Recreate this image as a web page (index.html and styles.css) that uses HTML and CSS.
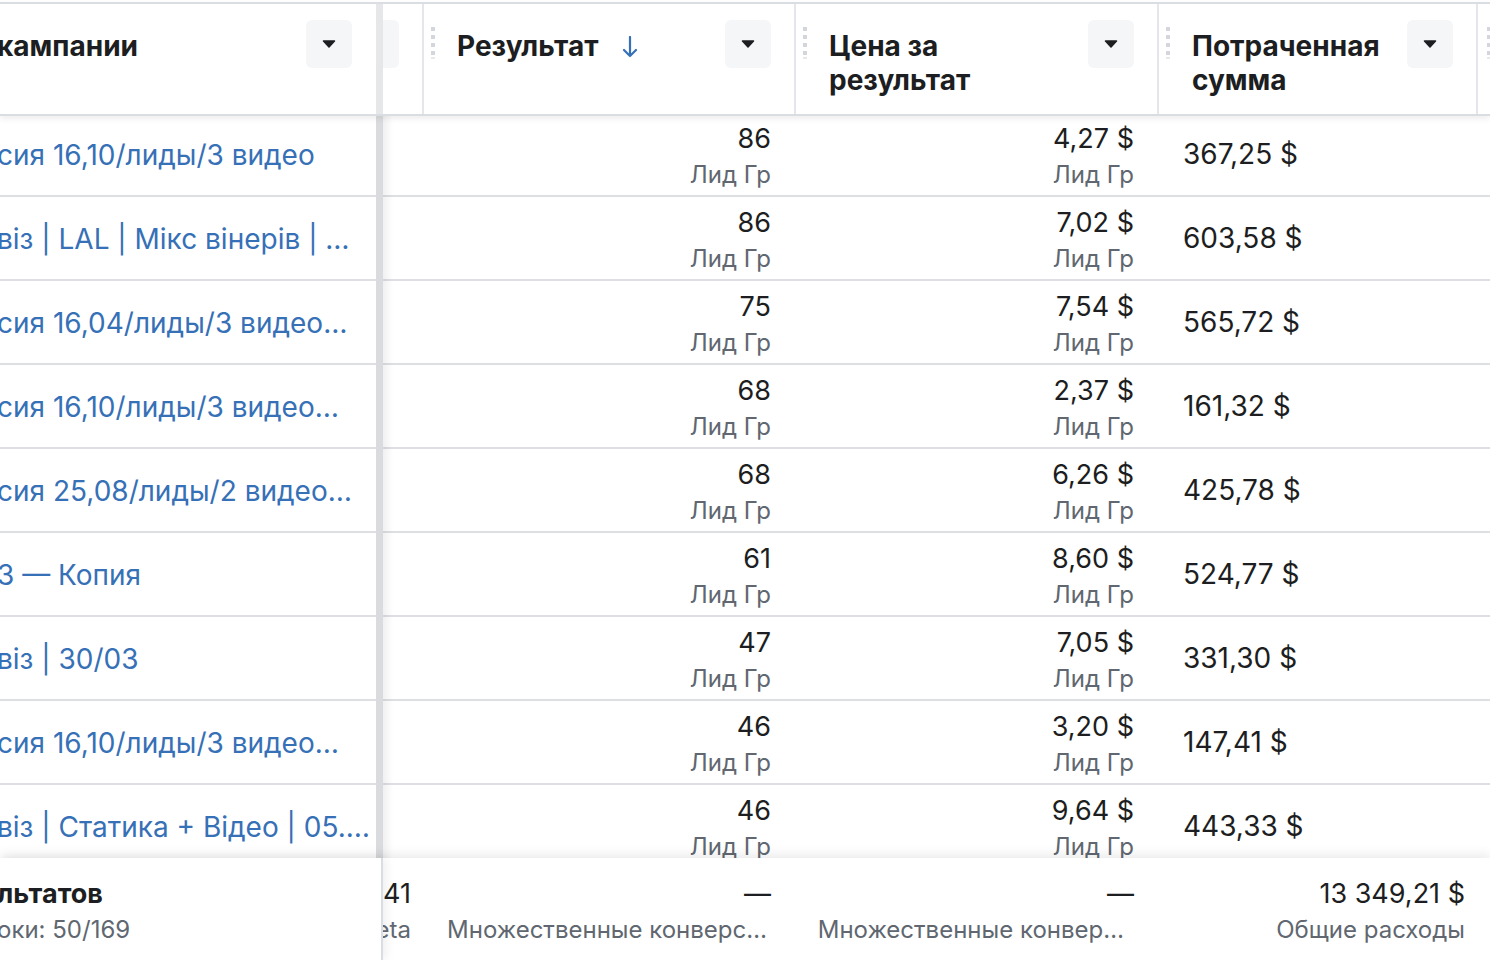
FILE: index.html
```html
<!DOCTYPE html>
<html lang="ru">
<head>
    <meta charset="UTF-8">
    <meta name="viewport" content="width=device-width, initial-scale=1.0">
    <title>Кампании</title>
    <link rel="stylesheet" href="styles.css">
</head>
<body>
    <div class="page">
        <div class="grid head">
            <div class="hcell frozen">
                <span class="htitle cut">кампании</span>
                <button class="drop"><svg width="14" height="8" viewBox="0 0 14 8"><path d="M1.5 1h11L7 7z" fill="#1c1e21" stroke="#1c1e21" stroke-linejoin="round" stroke-width="1.5"/></svg></button>
            </div>
            <div class="hcell stub">
                <button class="drop half"></button>
            </div>
            <div class="hcell col">
                <svg class="grip" width="4" height="32" viewBox="0 0 4 32"><rect y="0" width="4" height="4" fill="#d3d6db"/><rect y="8" width="4" height="4" fill="#d3d6db"/><rect y="16" width="4" height="4" fill="#d3d6db"/><rect y="24" width="4" height="4" fill="#d3d6db"/><rect y="30" width="4" height="2" fill="#e6e8eb"/></svg>
                <span class="htitle">Результат</span>
                <svg class="sort" width="16" height="22" viewBox="0 0 16 22"><path d="M8 1v19M2 14l6 6 6-6" fill="none" stroke="#3670b6" stroke-width="2.2" stroke-linecap="round" stroke-linejoin="round"/></svg>
                <button class="drop"><svg width="14" height="8" viewBox="0 0 14 8"><path d="M1.5 1h11L7 7z" fill="#1c1e21" stroke="#1c1e21" stroke-linejoin="round" stroke-width="1.5"/></svg></button>
            </div>
            <div class="hcell col">
                <svg class="grip" width="4" height="32" viewBox="0 0 4 32"><rect y="0" width="4" height="4" fill="#d3d6db"/><rect y="8" width="4" height="4" fill="#d3d6db"/><rect y="16" width="4" height="4" fill="#d3d6db"/><rect y="24" width="4" height="4" fill="#d3d6db"/><rect y="30" width="4" height="2" fill="#e6e8eb"/></svg>
                <span class="htitle">Цена за<br>результат</span>
                <button class="drop"><svg width="14" height="8" viewBox="0 0 14 8"><path d="M1.5 1h11L7 7z" fill="#1c1e21" stroke="#1c1e21" stroke-linejoin="round" stroke-width="1.5"/></svg></button>
            </div>
            <div class="hcell col">
                <svg class="grip" width="4" height="32" viewBox="0 0 4 32"><rect y="0" width="4" height="4" fill="#d3d6db"/><rect y="8" width="4" height="4" fill="#d3d6db"/><rect y="16" width="4" height="4" fill="#d3d6db"/><rect y="24" width="4" height="4" fill="#d3d6db"/><rect y="30" width="4" height="2" fill="#e6e8eb"/></svg>
                <span class="htitle">Потраченная<br>сумма</span>
                <button class="drop"><svg width="14" height="8" viewBox="0 0 14 8"><path d="M1.5 1h11L7 7z" fill="#1c1e21" stroke="#1c1e21" stroke-linejoin="round" stroke-width="1.5"/></svg></button>
            </div>
            <div class="hcell col last">
                <svg class="grip" width="4" height="32" viewBox="0 0 4 32"><rect y="0" width="4" height="4" fill="#d3d6db"/><rect y="8" width="4" height="4" fill="#d3d6db"/><rect y="16" width="4" height="4" fill="#d3d6db"/><rect y="24" width="4" height="4" fill="#d3d6db"/><rect y="30" width="4" height="2" fill="#e6e8eb"/></svg>
            </div>
        </div>

        <div class="rows">
            <div class="grid row">
                <div class="cell frozen"><a class="name cut">сия 16,10/лиды/3 видео</a></div>
                <div class="cell stub"></div>
                <div class="cell num"><span class="val">86</span><span class="sub">Лид Гр</span></div>
                <div class="cell num"><span class="val">4,27 $</span><span class="sub">Лид Гр</span></div>
                <div class="cell spent">367,25 $</div>
                <div class="cell"></div>
            </div>
            <div class="grid row">
                <div class="cell frozen"><a class="name cut">віз | LAL | Мікс вінерів | …</a></div>
                <div class="cell stub"></div>
                <div class="cell num"><span class="val">86</span><span class="sub">Лид Гр</span></div>
                <div class="cell num"><span class="val">7,02 $</span><span class="sub">Лид Гр</span></div>
                <div class="cell spent">603,58 $</div>
                <div class="cell"></div>
            </div>
            <div class="grid row">
                <div class="cell frozen"><a class="name cut">сия 16,04/лиды/3 видео…</a></div>
                <div class="cell stub"></div>
                <div class="cell num"><span class="val">75</span><span class="sub">Лид Гр</span></div>
                <div class="cell num"><span class="val">7,54 $</span><span class="sub">Лид Гр</span></div>
                <div class="cell spent">565,72 $</div>
                <div class="cell"></div>
            </div>
            <div class="grid row">
                <div class="cell frozen"><a class="name cut">сия 16,10/лиды/3 видео…</a></div>
                <div class="cell stub"></div>
                <div class="cell num"><span class="val">68</span><span class="sub">Лид Гр</span></div>
                <div class="cell num"><span class="val">2,37 $</span><span class="sub">Лид Гр</span></div>
                <div class="cell spent">161,32 $</div>
                <div class="cell"></div>
            </div>
            <div class="grid row">
                <div class="cell frozen"><a class="name cut">сия 25,08/лиды/2 видео…</a></div>
                <div class="cell stub"></div>
                <div class="cell num"><span class="val">68</span><span class="sub">Лид Гр</span></div>
                <div class="cell num"><span class="val">6,26 $</span><span class="sub">Лид Гр</span></div>
                <div class="cell spent">425,78 $</div>
                <div class="cell"></div>
            </div>
            <div class="grid row">
                <div class="cell frozen"><a class="name cut">3 — Копия</a></div>
                <div class="cell stub"></div>
                <div class="cell num"><span class="val">61</span><span class="sub">Лид Гр</span></div>
                <div class="cell num"><span class="val">8,60 $</span><span class="sub">Лид Гр</span></div>
                <div class="cell spent">524,77 $</div>
                <div class="cell"></div>
            </div>
            <div class="grid row">
                <div class="cell frozen"><a class="name cut">віз | 30/03</a></div>
                <div class="cell stub"></div>
                <div class="cell num"><span class="val">47</span><span class="sub">Лид Гр</span></div>
                <div class="cell num"><span class="val">7,05 $</span><span class="sub">Лид Гр</span></div>
                <div class="cell spent">331,30 $</div>
                <div class="cell"></div>
            </div>
            <div class="grid row">
                <div class="cell frozen"><a class="name cut">сия 16,10/лиды/3 видео…</a></div>
                <div class="cell stub"></div>
                <div class="cell num"><span class="val">46</span><span class="sub">Лид Гр</span></div>
                <div class="cell num"><span class="val">3,20 $</span><span class="sub">Лид Гр</span></div>
                <div class="cell spent">147,41 $</div>
                <div class="cell"></div>
            </div>
            <div class="grid row">
                <div class="cell frozen"><a class="name cut">віз | Статика + Відео | 05.…</a></div>
                <div class="cell stub"></div>
                <div class="cell num"><span class="val">46</span><span class="sub">Лид Гр</span></div>
                <div class="cell num"><span class="val">9,64 $</span><span class="sub">Лид Гр</span></div>
                <div class="cell spent">443,33 $</div>
                <div class="cell"></div>
            </div>
        </div>

        <div class="grid foot">
            <div class="fcell frozen">
                <span class="ftitle cut">льтатов</span>
                <span class="fsub cut">оки: 50/169</span>
            </div>
            <div class="fcell stub right">
                <span class="fval">41</span>
                <span class="fsub">eta</span>
            </div>
            <div class="fcell right">
                <span class="fval">—</span>
                <span class="fsub trim">Множественные конверс…</span>
            </div>
            <div class="fcell right">
                <span class="fval">—</span>
                <span class="fsub trim more">Множественные конвер…</span>
            </div>
            <div class="fcell right total">
                <span class="fval">13 349,21 $</span>
                <span class="fsub">Общие расходы</span>
            </div>
            <div class="fcell"></div>
        </div>
    </div>
</body>
</html>
```

FILE: styles.css
```css
* { box-sizing: border-box; margin: 0; padding: 0; }
body { background: #fff; font-family: Inter, "Noto Sans", sans-serif; color: #1c1e21; overflow: hidden; }
.page { height: 960px; padding-top: 2px; display: flex; flex-direction: column; overflow: hidden; }
.grid { display: grid; grid-template-columns: 383px 39px 372px 363px 319px 1fr; }

/* header */
.head { height: 114px; border-top: 2px solid #dadde1; border-bottom: 2px solid #dadde1; position: relative; z-index: 2; background: #fff; box-shadow: 0 3px 6px rgba(0,0,0,0.07); flex-shrink: 0; }
.hcell { display: flex; align-items: flex-start; padding-top: 16px; overflow: hidden; }
.hcell.frozen { border-right: 7px solid #e6e7e9; padding-right: 24px; justify-content: space-between; }
.hcell.col { border-left: 2px solid #e4e6eb; padding-left: 7px; padding-right: 23px; }
.hcell.last { padding-left: 9px; }
.htitle { font-size: 28px; font-weight: 700; line-height: 34px; margin-top: 9px; white-space: nowrap; }
.cut { margin-left: -3px; }
.grip { margin-top: 7px; margin-right: 22px; flex-shrink: 0; }
.sort { margin-top: 16px; margin-left: 24px; }
.drop { width: 46px; height: 48px; border: none; border-radius: 6px; background: #f5f6f7; display: flex; align-items: center; justify-content: center; flex-shrink: 0; margin-left: auto; }
.hcell.frozen .drop { margin-left: 0; }
.drop.half { margin-left: -30px; }

/* body rows */
.rows { flex: 1; margin-top: -3px; overflow: hidden; }
.row { height: 84px; border-bottom: 2px solid #dddfe2; }
.cell { display: flex; align-items: center; overflow: hidden; font-size: 28px; }
.cell.frozen { border-right: 7px solid #d9dbde; margin-bottom: -2px; padding-right: 20px; }
.cell.stub { background: linear-gradient(to right, rgba(0,0,0,0.06), rgba(0,0,0,0) 10px); margin-bottom: -2px; }
.name { color: #3670b6; white-space: nowrap; line-height: 36px; }
.num { flex-direction: column; align-items: flex-end; justify-content: flex-start; padding: 8px 23px 0 0; font-size: 27px; }
.val { line-height: 36px; }
.sub { font-size: 24px; line-height: 36px; color: #606770; }
.spent { padding-left: 26px; }

/* footer */
.foot { height: 102px; flex-shrink: 0; background: #fff; position: relative; z-index: 2; box-shadow: 0 -4px 10px rgba(0,0,0,0.08); }
.fcell { display: flex; flex-direction: column; padding-top: 18px; overflow: hidden; white-space: nowrap; }
.fcell.frozen { border-right: 2px solid #dadde1; box-shadow: 4px 0 8px rgba(0,0,0,0.06); }
.fcell.right { align-items: flex-end; padding-right: 23px; }
.fcell.stub { padding-right: 11px; }
.fcell.total { padding-right: 11px; }
.ftitle { font-size: 27px; font-weight: 700; line-height: 36px; }
.fval { font-size: 27px; line-height: 36px; }
.fsub { font-size: 24px; line-height: 36px; color: #606770; }
.fsub.trim { margin-right: 4px; }
.fsub.trim.more { margin-right: 10px; }
```
